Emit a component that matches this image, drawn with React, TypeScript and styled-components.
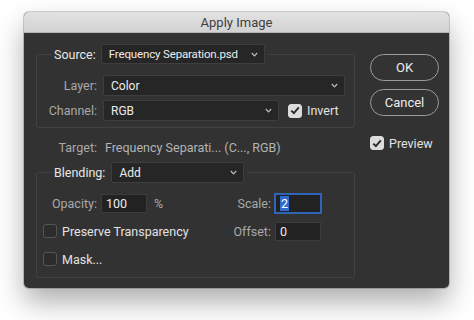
import React from "react";
import styled, { createGlobalStyle } from "styled-components";

const Global = createGlobalStyle`
  html, body { margin: 0; padding: 0; background: #ffffff; }
  body { font-family: Roboto, "Noto Sans", "Liberation Sans", sans-serif; font-size: 12.5px; }
  * { box-sizing: border-box; }
`;

const Page = styled.div`
  width: 474px;
  height: 320px;
  padding: 12px 0 0 24px;
  background: #ffffff;
`;

const Window = styled.div`
  width: 425px;
  height: 276px;
  border-radius: 5px;
  overflow: hidden;
  background: #323232;
  box-shadow: 0 14px 28px rgba(0, 0, 0, 0.32), 0 0 0 1px rgba(0, 0, 0, 0.18);
  display: flex;
  flex-direction: column;
`;

const TitleBar = styled.div`
  height: 21px;
  flex: none;
  background: linear-gradient(#e2e2e2, #d2d2d2);
  border-bottom: 1px solid #b4b4b4;
  color: #3e3e3e;
  font-size: 13px;
  display: flex;
  align-items: center;
  justify-content: center;
  padding-top: 1px;
`;

const Body = styled.div`
  display: flex;
  padding: 11px 10px 0 12px;
`;

const LeftCol = styled.div`
  width: 319px;
  display: flex;
  flex-direction: column;
`;

const RightCol = styled.div`
  width: 69px;
  margin-left: 15px;
  padding-top: 10px;
  display: flex;
  flex-direction: column;
`;

const Group = styled.fieldset<{ $padRight: number; $padBottom: number }>`
  margin: 0;
  padding: 0 ${(p) => p.$padRight}px ${(p) => p.$padBottom}px 0;
  border: 1px solid #414141;
  border-radius: 2px;
  min-width: 0;
`;

const Legend = styled.legend`
  margin-left: 14px;
  padding: 0 3px;
  display: flex;
  align-items: center;
`;

const Label = styled.span<{ $w?: number; $bright?: boolean }>`
  ${(p) => (p.$w ? `width: ${p.$w}px; text-align: right;` : "")}
  flex: none;
  color: ${(p) => (p.$bright ? "#e6e6e6" : "#a9a9a9")};
  white-space: nowrap;
`;

const Rows = styled.div<{ $top: number; $gap: number }>`
  margin-top: ${(p) => p.$top}px;
  display: flex;
  flex-direction: column;
  gap: ${(p) => p.$gap}px;
`;

const Row = styled.div<{ $h: number }>`
  height: ${(p) => p.$h}px;
  display: flex;
  align-items: center;
`;

const SelectBox = styled.div<{ $w: number; $h: number; $ml: number }>`
  width: ${(p) => p.$w}px;
  height: ${(p) => p.$h}px;
  margin-left: ${(p) => p.$ml}px;
  flex: none;
  background: #262626;
  border: 1px solid #3e3e3e;
  border-radius: 2px;
  display: flex;
  align-items: center;
  justify-content: space-between;
  gap: 5px;
  padding: 0 6px 0 7px;
  color: #ececec;
  font-size: 12px;
  white-space: nowrap;
  overflow: hidden;
`;

const SelectValue = styled.span<{ $tight?: boolean }>`
  ${(p) => (p.$tight ? "font-size: 11.5px; letter-spacing: -0.15px;" : "")}
`;

const Chevron = () => (
  <svg width="7" height="5" viewBox="0 0 7 5" style={{ flex: "none" }}>
    <polyline points="0.8,1 3.5,3.8 6.2,1" fill="none" stroke="#bdbdbd" strokeWidth="1.2" />
  </svg>
);

const Select = ({
  value,
  w,
  h,
  ml,
  tight,
}: {
  value: string;
  w: number;
  h: number;
  ml: number;
  tight?: boolean;
}) => (
  <SelectBox $w={w} $h={h} $ml={ml}>
    <SelectValue $tight={tight}>{value}</SelectValue>
    <Chevron />
  </SelectBox>
);

const CheckBox = styled.span<{ $on?: boolean; $ml?: number }>`
  width: 14px;
  height: 14px;
  flex: none;
  margin-left: ${(p) => p.$ml ?? 0}px;
  border-radius: 3px;
  background: ${(p) => (p.$on ? "#dcdcdc" : "#2c2c2c")};
  border: 1px solid ${(p) => (p.$on ? "#dcdcdc" : "#555555")};
  display: flex;
  align-items: center;
  justify-content: center;
`;

const Check = ({ on, ml }: { on?: boolean; ml?: number }) => (
  <CheckBox $on={on} $ml={ml}>
    {on && (
      <svg width="10" height="9" viewBox="0 0 10 9">
        <polyline points="1.3,4.6 3.9,7.2 8.8,1.4" fill="none" stroke="#2a2a2a" strokeWidth="1.9" />
      </svg>
    )}
  </CheckBox>
);

const CheckText = styled.span<{ $ml: number }>`
  margin-left: ${(p) => p.$ml}px;
  color: #e2e2e2;
  white-space: nowrap;
`;

const TargetRow = styled.div`
  height: 20px;
  margin: 9px 0 5px 0;
  display: flex;
  align-items: center;
`;

const TargetValue = styled.span`
  margin-left: 8px;
  color: #b4b4b4;
  white-space: nowrap;
`;

const Field = styled.div<{ $focus?: boolean; $ml: number }>`
  width: 46px;
  height: 19px;
  margin-left: ${(p) => p.$ml}px;
  flex: none;
  background: #222222;
  border: 1px solid ${(p) => (p.$focus ? "#2f64b8" : "#3c3c3c")};
  box-shadow: ${(p) => (p.$focus ? "0 0 0 1px #2f64b8" : "none")};
  display: flex;
  align-items: center;
  padding-left: 4px;
  color: #ececec;
`;

const Selected = styled.span`
  background: #2f6bd0;
  color: #ffffff;
  padding: 0 1px;
`;

const RightGroup = styled.div`
  margin-left: auto;
  display: flex;
  align-items: center;
`;

const Unit = styled.span`
  margin-left: 7px;
  color: #a9a9a9;
`;

const PillButton = styled.button<{ $mt: number }>`
  width: 69px;
  height: 27px;
  margin-top: ${(p) => p.$mt}px;
  border-radius: 14px;
  border: 1.5px solid #9c9c9c;
  background: #333333;
  color: #ededed;
  font-family: inherit;
  font-size: 13px;
  padding: 0;
`;

const PreviewRow = styled.div`
  margin-top: 20px;
  height: 14px;
  display: flex;
  align-items: center;
`;

export default function App() {
  return (
    <Page>
      <Global />
      <Window>
        <TitleBar>Apply Image</TitleBar>
        <Body>
          <LeftCol>
            <Group $padRight={9} $padBottom={6}>
              <Legend>
                <Label $bright>Source:</Label>
                <Select value="Frequency Separation.psd" w={164} h={20} ml={5} tight />
              </Legend>
              <Rows $top={11} $gap={4}>
                <Row $h={21}>
                  <Label $w={60}>Layer:</Label>
                  <Select value="Color" w={242} h={21} ml={6} />
                </Row>
                <Row $h={21}>
                  <Label $w={60}>Channel:</Label>
                  <Select value="RGB" w={176} h={21} ml={6} />
                  <Check on ml={9} />
                  <CheckText $ml={5}>Invert</CheckText>
                </Row>
              </Rows>
            </Group>
            <TargetRow>
              <Label $w={61}>Target:</Label>
              <TargetValue>Frequency Separati... (C..., RGB)</TargetValue>
            </TargetRow>
            <Group $padRight={33} $padBottom={8}>
              <Legend>
                <Label $bright>Blending:</Label>
                <Select value="Add" w={133} h={21} ml={6} />
              </Legend>
              <Rows $top={10} $gap={8}>
                <Row $h={20}>
                  <Label $w={60}>Opacity:</Label>
                  <Field $ml={4}>100</Field>
                  <Unit>%</Unit>
                  <RightGroup>
                    <Label>Scale:</Label>
                    <Field $ml={4} $focus>
                      <Selected>2</Selected>
                    </Field>
                  </RightGroup>
                </Row>
                <Row $h={20}>
                  <Check ml={6} />
                  <CheckText $ml={5}>Preserve Transparency</CheckText>
                  <RightGroup>
                    <Label>Offset:</Label>
                    <Field $ml={4}>0</Field>
                  </RightGroup>
                </Row>
                <Row $h={20}>
                  <Check ml={6} />
                  <CheckText $ml={5}>Mask...</CheckText>
                </Row>
              </Rows>
            </Group>
          </LeftCol>
          <RightCol>
            <PillButton $mt={0}>OK</PillButton>
            <PillButton $mt={8}>Cancel</PillButton>
            <PreviewRow>
              <Check on />
              <CheckText $ml={5}>Preview</CheckText>
            </PreviewRow>
          </RightCol>
        </Body>
      </Window>
    </Page>
  );
}
